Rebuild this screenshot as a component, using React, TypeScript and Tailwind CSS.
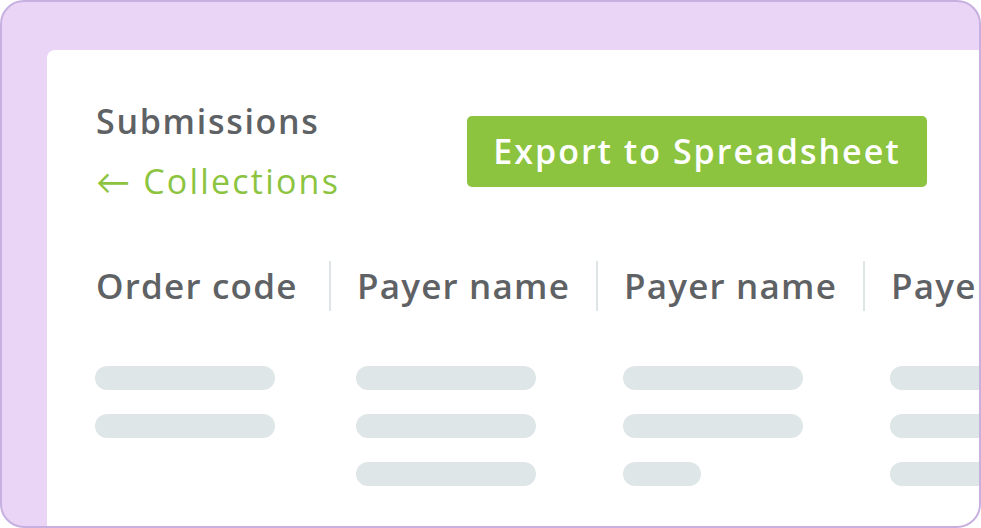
import React from "react";

const font = { fontFamily: '"Open Sans", "Lato", sans-serif' };

function Bar({ w }: { w: string }) {
  return <div className={`h-[24px] shrink-0 rounded-full bg-[#dfe6e8] ${w}`} />;
}

export default function App() {
  return (
    <div className="w-[981px] h-[528px] bg-white">
      <div className="w-[981px] h-[528px] rounded-[24px] border-2 border-[#c7b0df] bg-[#ead5f7] overflow-hidden pl-[45px] pt-[48px]">
        <div className="bg-white rounded-tl-[8px] w-full h-full pl-[49px] pt-[49px] overflow-hidden" style={font}>
          <div className="flex items-start">
            <div className="w-[371px] shrink-0">
              <div className="text-[34px] leading-[44px] font-semibold text-[#5f6265] tracking-[1.7px]">Submissions</div>
              <div className="text-[34px] leading-[44px] mt-[16px] text-[#8cc43f] tracking-[2.2px]">← Collections</div>
            </div>
            <div className="shrink-0 mt-[17px] w-[460px] h-[71px] rounded-[5px] bg-[#8cc43f] flex items-center justify-center text-white text-[34px] font-semibold tracking-[2px]">
              Export to Spreadsheet
            </div>
          </div>
          <div className="mt-[58px] flex items-center h-[50px] text-[35px] font-semibold text-[#5f6265] whitespace-nowrap tracking-[1.2px]">
            <div className="w-[233px] shrink-0">Order code</div>
            <div className="w-[2px] h-[50px] shrink-0 bg-[#dde5e7]" />
            <div className="w-[265px] shrink-0 pl-[26px]">Payer name</div>
            <div className="w-[2px] h-[50px] shrink-0 bg-[#dde5e7]" />
            <div className="w-[265px] shrink-0 pl-[26px]">Payer name</div>
            <div className="w-[2px] h-[50px] shrink-0 bg-[#dde5e7]" />
            <div className="shrink-0 pl-[26px]">Payer name</div>
          </div>
          <div className="mt-[55px] flex -ml-[1px]">
            <div className="w-[261px] shrink-0 flex flex-col gap-[24px]">
              <Bar w="w-[180px]" />
              <Bar w="w-[180px]" />
            </div>
            <div className="w-[267px] shrink-0 flex flex-col gap-[24px]">
              <Bar w="w-[180px]" />
              <Bar w="w-[180px]" />
              <Bar w="w-[180px]" />
            </div>
            <div className="w-[267px] shrink-0 flex flex-col gap-[24px]">
              <Bar w="w-[180px]" />
              <Bar w="w-[180px]" />
              <Bar w="w-[78px]" />
            </div>
            <div className="w-[267px] shrink-0 flex flex-col gap-[24px]">
              <Bar w="w-[180px]" />
              <Bar w="w-[180px]" />
              <Bar w="w-[180px]" />
            </div>
          </div>
        </div>
      </div>
    </div>
  );
}
